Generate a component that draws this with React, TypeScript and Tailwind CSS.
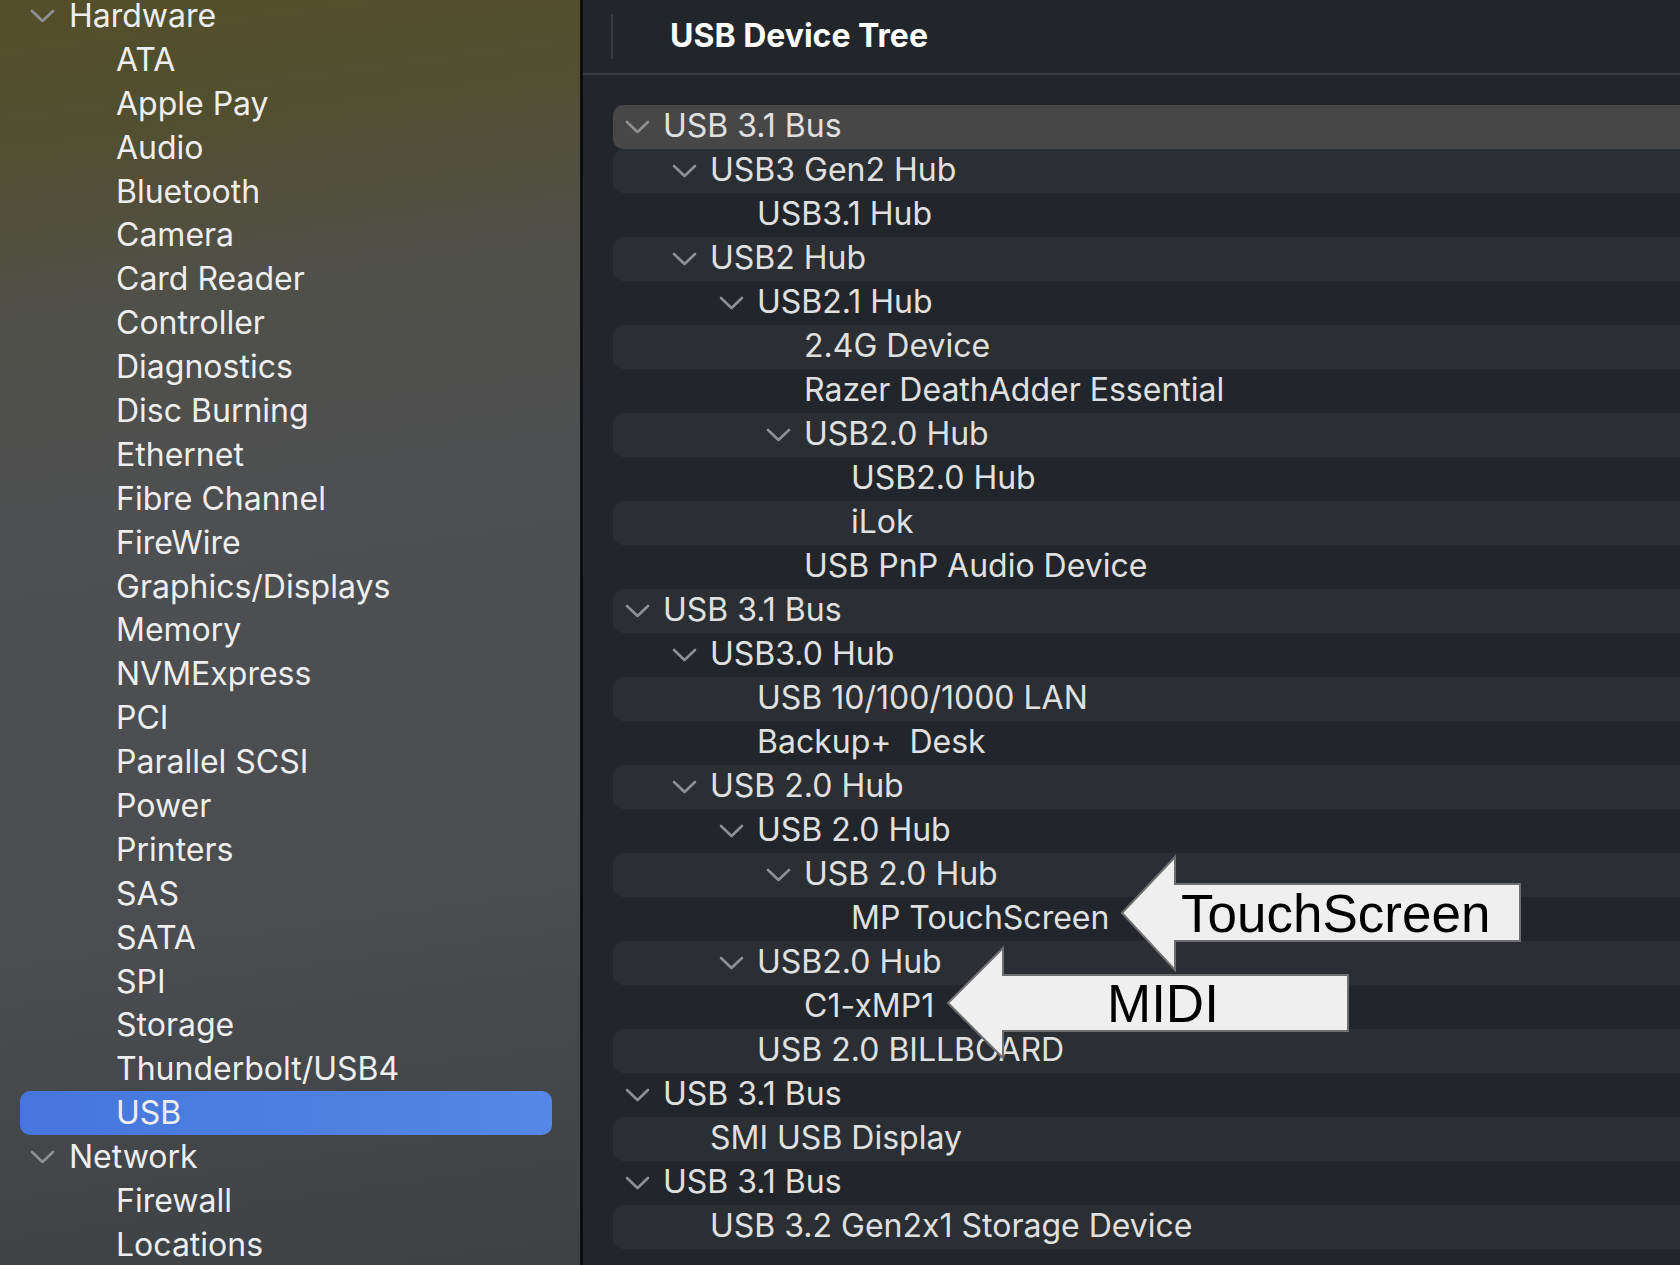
import React from "react";

type TreeRow = { label: string; level: number; open?: boolean };

const sidebarItems: TreeRow[] = [
  { label: "Hardware", level: 0, open: true },
  { label: "ATA", level: 1 },
  { label: "Apple Pay", level: 1 },
  { label: "Audio", level: 1 },
  { label: "Bluetooth", level: 1 },
  { label: "Camera", level: 1 },
  { label: "Card Reader", level: 1 },
  { label: "Controller", level: 1 },
  { label: "Diagnostics", level: 1 },
  { label: "Disc Burning", level: 1 },
  { label: "Ethernet", level: 1 },
  { label: "Fibre Channel", level: 1 },
  { label: "FireWire", level: 1 },
  { label: "Graphics/Displays", level: 1 },
  { label: "Memory", level: 1 },
  { label: "NVMExpress", level: 1 },
  { label: "PCI", level: 1 },
  { label: "Parallel SCSI", level: 1 },
  { label: "Power", level: 1 },
  { label: "Printers", level: 1 },
  { label: "SAS", level: 1 },
  { label: "SATA", level: 1 },
  { label: "SPI", level: 1 },
  { label: "Storage", level: 1 },
  { label: "Thunderbolt/USB4", level: 1 },
  { label: "USB", level: 1 },
  { label: "Network", level: 0, open: true },
  { label: "Firewall", level: 1 },
  { label: "Locations", level: 1 },
];

const treeRows: TreeRow[] = [
  { label: "USB 3.1 Bus", level: 0, open: true },
  { label: "USB3 Gen2 Hub", level: 1, open: true },
  { label: "USB3.1 Hub", level: 2 },
  { label: "USB2 Hub", level: 1, open: true },
  { label: "USB2.1 Hub", level: 2, open: true },
  { label: "2.4G Device", level: 3 },
  { label: "Razer DeathAdder Essential", level: 3 },
  { label: "USB2.0 Hub", level: 3, open: true },
  { label: "USB2.0 Hub", level: 4 },
  { label: "iLok", level: 4 },
  { label: "USB PnP Audio Device", level: 3 },
  { label: "USB 3.1 Bus", level: 0, open: true },
  { label: "USB3.0 Hub", level: 1, open: true },
  { label: "USB 10/100/1000 LAN", level: 2 },
  { label: "Backup+\u00a0 Desk", level: 2 },
  { label: "USB 2.0 Hub", level: 1, open: true },
  { label: "USB 2.0 Hub", level: 2, open: true },
  { label: "USB 2.0 Hub", level: 3, open: true },
  { label: "MP TouchScreen", level: 4 },
  { label: "USB2.0 Hub", level: 2, open: true },
  { label: "C1-xMP1", level: 3 },
  { label: "USB 2.0 BILLBOARD", level: 2 },
  { label: "USB 3.1 Bus", level: 0, open: true },
  { label: "SMI USB Display", level: 1 },
  { label: "USB 3.1 Bus", level: 0, open: true },
  { label: "USB 3.2 Gen2x1 Storage Device", level: 1 },
];

const treeIndent = ["pl-[12px]", "pl-[59px]", "pl-[106px]", "pl-[153px]", "pl-[200px]"];
const sideIndent = ["pl-[10px]", "pl-[57px]"];

function Chevron() {
  return (
    <svg width="25" height="16" viewBox="0 0 25 16" className="block">
      <polyline
        points="2,3 12.5,13 23,3"
        fill="none"
        stroke="#8e9093"
        strokeWidth="2.6"
        strokeLinecap="round"
        strokeLinejoin="round"
      />
    </svg>
  );
}

function Sidebar() {
  return (
    <aside className="w-[580px] shrink-0 h-full overflow-hidden bg-[linear-gradient(172deg,#544f29_0%,#524f2f_10%,#50504a_24%,#4e4f51_40%,#4b4d50_70%,#3e4144_100%)]">
      <div className="-mt-[6px] ml-[20px] w-[532px] flex flex-col">
        {sidebarItems.map((it, i) => {
          const selected = it.label === "USB";
          return (
            <div
              key={i}
              className={
                "h-[43.9px] flex items-center rounded-[10px] " +
                sideIndent[it.level] +
                (selected ? " bg-[linear-gradient(90deg,#4676dc,#5487e6)]" : "")
              }
            >
              <div className="w-[39px] shrink-0 flex items-center">
                {it.open ? <Chevron /> : null}
              </div>
              <span className="text-[32px] leading-none text-[#eeeeee] whitespace-nowrap">
                {it.label}
              </span>
            </div>
          );
        })}
      </div>
    </aside>
  );
}

function Tree() {
  return (
    <main className="flex-1 h-full bg-[#22262a] flex flex-col overflow-hidden">
      <header className="h-[75px] shrink-0 flex items-center border-b-2 border-[#393d41]">
        <div className="ml-[28px] w-[2px] h-[45px] bg-[#3a3e42]" />
        <span className="relative -top-[1px] ml-[57px] text-[32px] font-bold leading-none text-white">
          USB Device Tree
        </span>
      </header>
      <div className="pt-[30px] pl-[30px] flex flex-col">
        {treeRows.map((r, i) => {
          const bg =
            i === 0 ? "bg-[#474747]" : i % 2 === 1 ? "bg-[#2b2f33]" : "";
          return (
            <div
              key={i}
              className={
                "h-[44px] flex items-center rounded-l-[10px] " + treeIndent[r.level] + " " + bg
              }
            >
              <div className="w-[38px] shrink-0 flex items-center">
                {r.open ? <Chevron /> : null}
              </div>
              <span className="relative -top-[1px] text-[32px] leading-none text-[#e0e0e0] whitespace-nowrap">
                {r.label}
              </span>
            </div>
          );
        })}
      </div>
    </main>
  );
}

function Annotations() {
  return (
    <div className="absolute inset-0 pointer-events-none">
      <svg width="1680" height="1265" className="absolute left-0 top-0">
        <polygon
          points="1122,913 1175,857 1175,884 1520,884 1520,941 1175,941 1175,970"
          fill="#efefef"
          stroke="#6f6f6f"
          strokeWidth="2"
          strokeLinejoin="miter"
        />
        <polygon
          points="948,1003 1003,948 1003,975 1348,975 1348,1031 1003,1031 1003,1058"
          fill="#efefef"
          stroke="#6f6f6f"
          strokeWidth="2"
          strokeLinejoin="miter"
        />
      </svg>
      <span className="absolute left-[1181px] top-[887px] text-[53px] leading-none text-black font-['Liberation_Sans',Arial,sans-serif]">
        TouchScreen
      </span>
      <span className="absolute left-[1107px] top-[977px] text-[53px] leading-none text-black font-['Liberation_Sans',Arial,sans-serif]">
        MIDI
      </span>
    </div>
  );
}

export default function App() {
  return (
    <div className="relative w-[1680px] h-[1265px] overflow-hidden flex font-['Inter','Noto_Sans',sans-serif] [font-feature-settings:'calt'_0] antialiased">
      <Sidebar />
      <div className="w-[3px] shrink-0 h-full bg-[#0c0d0e]" />
      <Tree />
      <Annotations />
    </div>
  );
}
